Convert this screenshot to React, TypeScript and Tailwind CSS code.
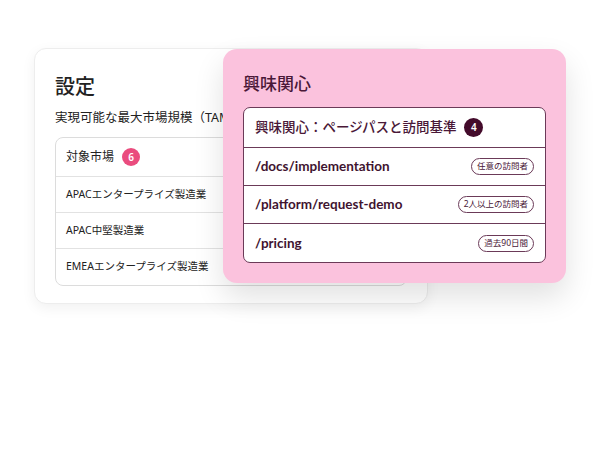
import React from "react"

const FONT = { fontFamily: '"Noto Sans", "Noto Sans CJK JP", sans-serif' }
const PATH_FONT = { fontFamily: 'Lato, "Noto Sans CJK JP", sans-serif' }

const markets = ["APACエンタープライズ製造業", "APAC中堅製造業", "EMEAエンタープライズ製造業"]

const paths = [
  { path: "/docs/implementation", tag: "任意の訪問者" },
  { path: "/platform/request-demo", tag: "2人以上の訪問者" },
  { path: "/pricing", tag: "過去90日間" },
]

export default function App() {
  return (
    <div className="h-[450px] w-[600px] bg-white" style={FONT}>
      <div className="relative pl-[34px] pt-[48px]">
        {/* Settings card (behind) */}
        <div className="h-[256px] w-[394px] overflow-hidden rounded-[12px] border border-[#ededed] bg-white px-[20px] pt-[25px] shadow-[0_4px_14px_rgba(0,0,0,0.06)]">
          <h2 className="text-[20px] leading-[26px] font-medium text-[#222]">設定</h2>
          <p className="mt-[9px] whitespace-nowrap text-[12.5px] leading-[18px] text-[#222]">
            実現可能な最大市場規模（TAM）
          </p>
          <div className="mt-[10px] rounded-[8px] border border-[#dcdcdc] bg-white">
            <div className="flex h-[39px] items-center gap-[8px] border-b border-[#e2e2e2] px-[10px]">
              <span className="text-[12px] text-[#222]">対象市場</span>
              <span className="flex h-[18px] w-[18px] items-center justify-center rounded-full bg-[#ea4c7e] text-[10px] font-semibold text-white">
                6
              </span>
            </div>
            {markets.map((m, i) => (
              <div
                key={m}
                className={`flex h-[36px] items-center px-[10px] text-[10.5px] text-[#222] ${i < markets.length - 1 ? "border-b border-[#e2e2e2]" : ""}`}
              >
                {m}
              </div>
            ))}
          </div>
        </div>

        {/* Interest card (front) */}
        <div className="absolute left-[223px] top-[49px] h-[234px] w-[343px] rounded-[14px] bg-[#fbc2dd] px-[20px] pt-[23px] shadow-[0_14px_30px_rgba(0,0,0,0.12)]">
          <h2 className="text-[17px] leading-[24px] font-medium text-[#4a1838]">興味関心</h2>
          <div className="mt-[11px] overflow-hidden rounded-[7px] border border-[#6b3a58] bg-white">
            <div className="flex h-[40px] items-center gap-[8px] border-b border-[#6b3a58] px-[11px]">
              <span className="text-[13.5px] font-medium text-[#4a1838]">興味関心：ページパスと訪問基準</span>
              <span className="flex h-[19px] w-[19px] items-center justify-center rounded-full bg-[#430b2b] text-[10px] font-semibold text-white">
                4
              </span>
            </div>
            {paths.map((p, i) => (
              <div
                key={p.path}
                className={`flex h-[38px] items-center justify-between px-[11px] ${i < paths.length - 1 ? "border-b border-[#6b3a58]" : ""}`}
              >
                <span className="text-[13.5px] font-bold text-[#3f1430]" style={PATH_FONT}>
                  {p.path}
                </span>
                <span className="flex h-[17px] items-center rounded-full border-[1.5px] border-[#6b3a58] px-[5px] text-[8.5px] text-[#4a1838]">
                  {p.tag}
                </span>
              </div>
            ))}
          </div>
        </div>
      </div>
    </div>
  )
}
